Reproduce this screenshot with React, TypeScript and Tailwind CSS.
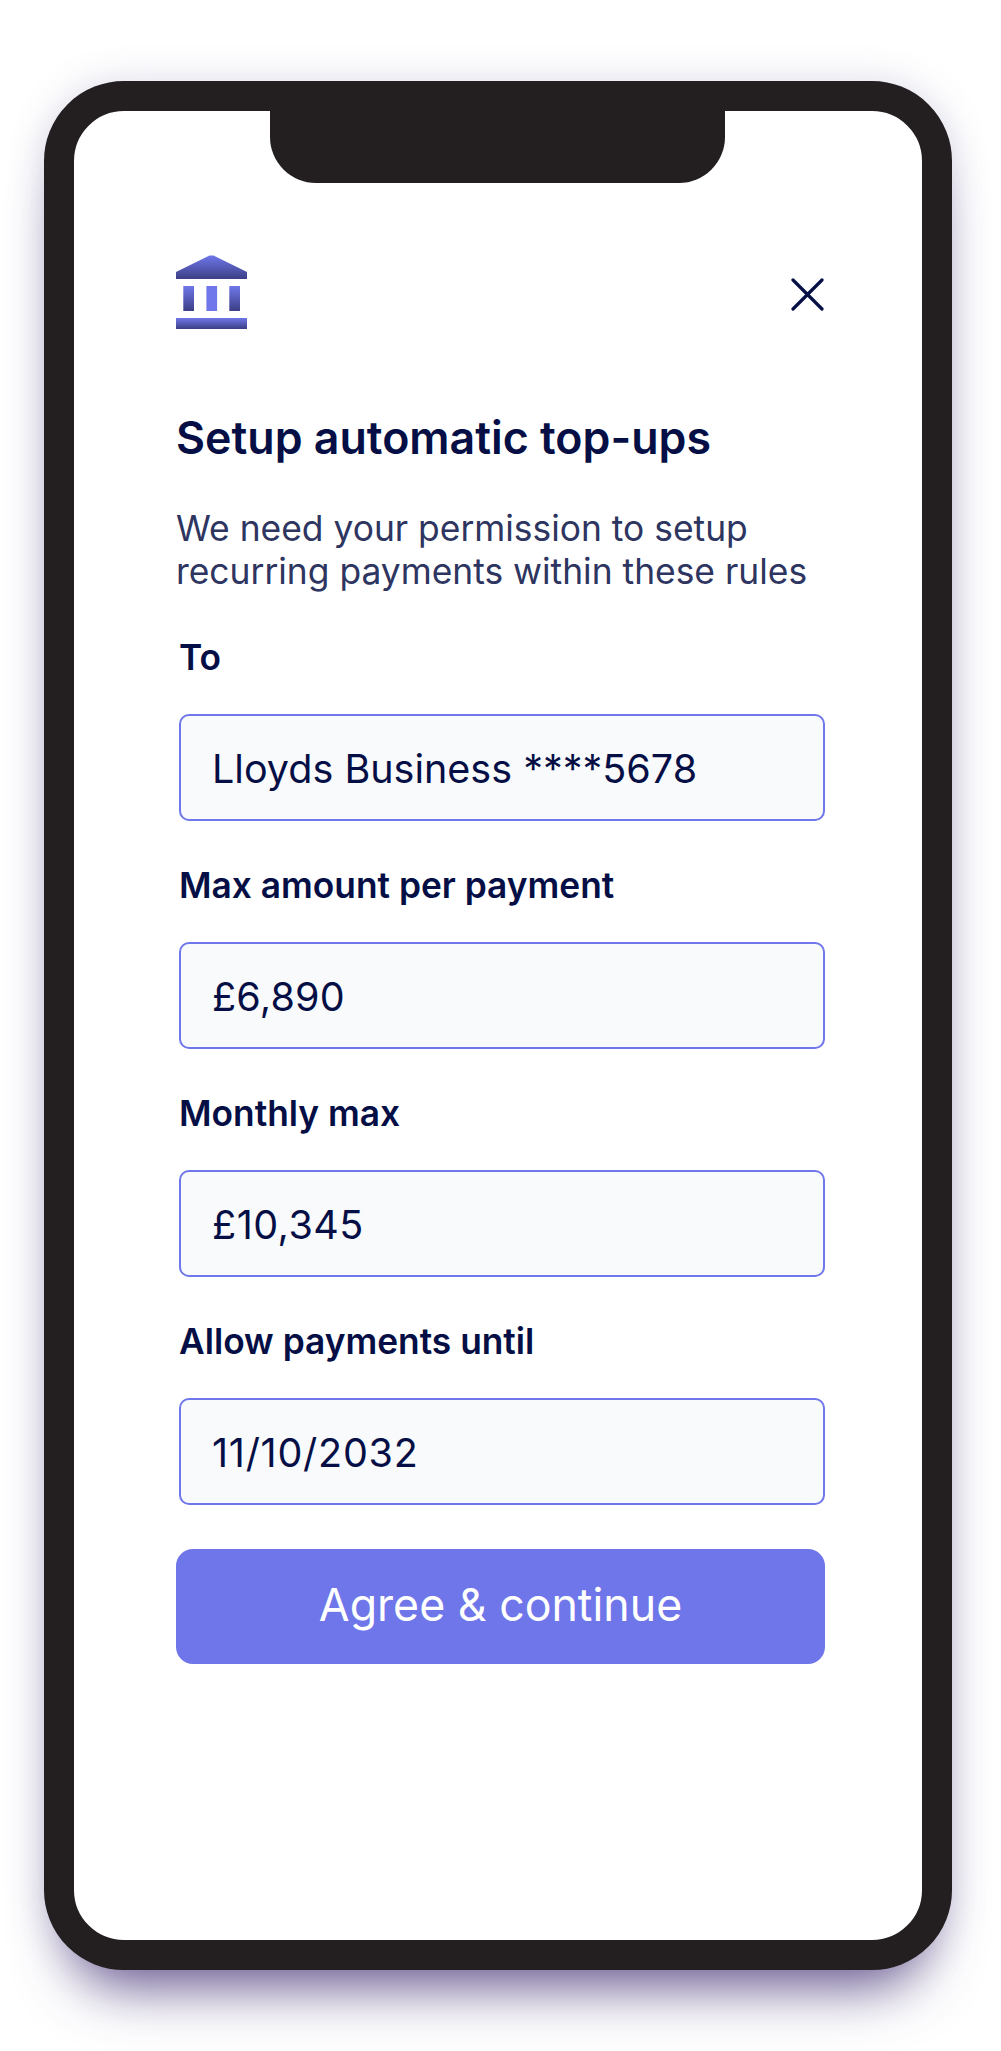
import React from "react";

const fields = [
  { label: "To", value: "Lloyds Business ****5678", spacing: "" },
  { label: "Max amount per payment", value: "£6,890", spacing: "tracking-[0.2px]" },
  { label: "Monthly max", value: "£10,345", spacing: "tracking-[0.5px]" },
  { label: "Allow payments until", value: "11/10/2032", spacing: "tracking-[0.75px]" },
];

const BankIcon: React.FC = () => (
  <svg width="72" height="74" viewBox="0 0 72 74" className="block">
    <defs>
      <linearGradient id="bankGrad" x1="0" y1="0" x2="0" y2="1">
        <stop offset="0" stopColor="#6f77ea" />
        <stop offset="1" stopColor="#3c3f85" />
      </linearGradient>
    </defs>
    <path d="M0 17 L33.5 0.5 H37.5 L71 17 V24 H0 Z" fill="url(#bankGrad)" />
    <rect x="7.3" y="31" width="10.7" height="25" fill="url(#bankGrad)" />
    <rect x="30.4" y="31" width="10.7" height="25" fill="#6f77ea" />
    <rect x="53.3" y="31" width="10.7" height="25" fill="url(#bankGrad)" />
    <rect x="0" y="63" width="71" height="11" fill="url(#bankGrad)" />
  </svg>
);

const CloseIcon: React.FC = () => (
  <svg width="34" height="34" viewBox="0 0 34 34" fill="none" className="block">
    <path d="M3 3 L32 32 M32 3 L3 32" stroke="#050f45" strokeWidth="3.2" strokeLinecap="round" />
  </svg>
);

export default function App() {
  return (
    <div className="h-[2051px] w-[1001px] overflow-hidden bg-white pl-[44px] pt-[81px] font-['Inter',sans-serif] text-[#050f45]">
      <div className="h-[1889px] w-[908px] rounded-[80px] border-[30px] border-[#231f20] bg-white shadow-[0_0_36px_rgba(95,85,150,0.22),0_44px_58px_-30px_rgba(60,40,110,0.8)]">
        <div className="relative h-full w-full rounded-[50px] pl-[102px] pr-[97px] pt-[144px]">
          <div className="absolute left-[196px] top-0 h-[72px] w-[455px] rounded-b-[46px] bg-[#231f20]" />

          <div className="flex items-start justify-between">
            <BankIcon />
            <div className="mr-[1px] mt-[22px]">
              <CloseIcon />
            </div>
          </div>

          <h1 className="mt-[85px] text-[44.7px] font-semibold leading-[48px]">Setup automatic top-ups</h1>
          <p className="mt-[45px] text-[35.4px] leading-[43px] text-[#2d3560]">
            We need your permission to setup
            <br />
            recurring payments within these rules
          </p>

          <div className="mt-[45px] flex flex-col gap-[45.5px] pl-[3px]">
            {fields.map((f) => (
              <div key={f.label}>
                <div className="text-[35.3px] font-semibold leading-[40px]">{f.label}</div>
                <div
                  className={`mt-[36px] flex h-[106.5px] items-center rounded-[10px] border-2 border-[#6f77ea] bg-[#f9fafc] pl-[31px] pt-[5px] text-[39.5px] ${f.spacing}`}
                >
                  {f.value}
                </div>
              </div>
            ))}
          </div>

          <button
            type="button"
            className="mt-[44px] flex h-[115px] w-[649px] items-center justify-center rounded-[17px] bg-[#6e76e9] text-[44.7px] text-white"
          >
            Agree &amp; continue
          </button>
        </div>
      </div>
    </div>
  );
}
